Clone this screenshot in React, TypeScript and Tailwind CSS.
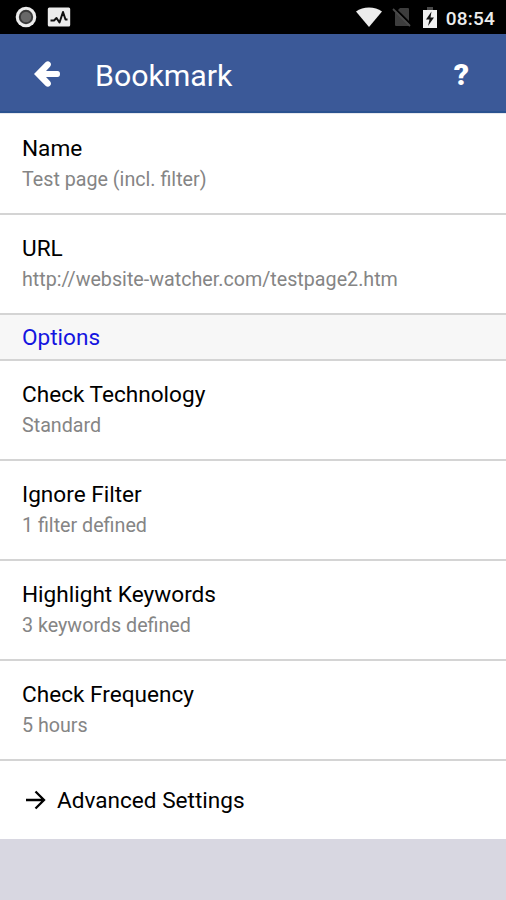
interface Setting {
  title: string;
  value: string;
}

const general: Setting[] = [
  { title: 'Name', value: 'Test page (incl. filter)' },
  { title: 'URL', value: 'http://website-watcher.com/testpage2.htm' },
];

const options: Setting[] = [
  { title: 'Check Technology', value: 'Standard' },
  { title: 'Ignore Filter', value: '1 filter defined' },
  { title: 'Highlight Keywords', value: '3 keywords defined' },
  { title: 'Check Frequency', value: '5 hours' },
];

function StatusBar() {
  return (
    <div className="flex h-[34px] shrink-0 items-center bg-black pr-[11px] pl-[15px]">
      <svg width="22" height="22" viewBox="0 0 22 22">
        <circle cx="11" cy="11" r="10.3" fill="#ececec" />
        <circle cx="11" cy="11" r="7.2" fill="#3a3a3a" />
        <circle cx="11" cy="11" r="5.2" fill="#686868" />
      </svg>
      <svg width="24" height="20" viewBox="0 0 24 20" className="ml-[10px]">
        <rect x="0.8" y="0.5" width="22.4" height="19" rx="1.5" fill="#ececec" />
        <path d="M3.500 13.500h3.500l2.500-2.500 3 4.500 3.500-10.500 2.500 7.500h2" fill="none" stroke="#111" strokeWidth="2" strokeLinejoin="round" />
      </svg>
      <div className="flex-1" />
      <svg width="26" height="20" viewBox="0 0 26 20">
        <path d="M0 4.500C7-1 19-1 26 4.500L13 20z" fill="#ececec" />
      </svg>
      <svg width="20" height="22" viewBox="0 0 20 22" className="ml-[10px]">
        <path d="M8 2h8q1 0 1 1v16q0 1-1 1H4q-1 0-1-1V7z" fill="#3d3d3d" />
        <path d="M2.500 2l17 17" stroke="#000" strokeWidth="2" />
        <path d="M1 3l17 17" stroke="#4a4a4a" strokeWidth="1.800" />
      </svg>
      <svg width="14" height="21" viewBox="0 0 14 21" className="ml-[11px]">
        <path d="M4 0h6v3H4z" fill="#4a4a4a" />
        <path d="M0 3h14v18H0z" fill="#f0f0f0" />
        <path d="M8.500 4.500L3 12.500h3.500L5 19l6-8.500H7.500z" fill="#111" />
      </svg>
      <span className="mt-[2px] ml-[9px] text-[19px] leading-none font-medium tracking-[0.2px] text-[#ececec]">08:54</span>
    </div>
  );
}

function Header() {
  return (
    <header className="flex h-[79px] shrink-0 items-center border-b-2 border-[#2a5290] bg-[#3b5998] pr-[37px] pl-[34px] text-white">
      <svg width="27" height="28" viewBox="0 0 27 28" className="mt-[3px]">
        <path d="M0 14L11.500 2.300q2.500-2 4.500 0t0 4.500L12 11h11.500q2.500 0 2.500 3t-2.500 3H12l4 4.200q2 2.500 0 4.500t-4.500 0z" fill="currentColor" />
      </svg>
      <h1 className="mt-[7px] ml-[34px] flex-1 text-[30.3px] leading-none">Bookmark</h1>
      <span className="mt-[4px] text-[30px] leading-none font-black">?</span>
    </header>
  );
}

function Row({ title, value }: Setting) {
  return (
    <div className="h-[100px] shrink-0 border-b-2 border-[#d4d4d4] px-[22px] pt-[20px]">
      <div className="text-[22.6px] leading-[28px] text-black">{title}</div>
      <div className="mt-[4px] text-[19.7px] leading-[26px] text-[#858585]">{value}</div>
    </div>
  );
}

export default function App() {
  return (
    <div className="flex h-[900px] w-[506px] flex-col overflow-hidden bg-[#d8d7e1] font-['Roboto',sans-serif]">
      <StatusBar />
      <Header />
      <main className="flex flex-col border-t border-[#e6e8ee] bg-white pt-px">
        {general.map((item) => (
          <Row key={item.title} {...item} />
        ))}
        <div className="flex h-[46px] items-center border-b-2 border-[#d4d4d4] bg-[#f7f7f7] px-[22px] pt-[2px] text-[22.6px] text-[#1414e0]">
          Options
        </div>
        {options.map((item) => (
          <Row key={item.title} {...item} />
        ))}
        <div className="flex h-[78px] items-center pl-[25px]">
          <svg width="22" height="20" viewBox="0 0 22 20">
            <path d="M1 10h18M10.500 1.500L19 10l-8.500 8.500" fill="none" stroke="#000" strokeWidth="2.300" />
          </svg>
          <span className="mt-[2px] ml-[10px] text-[22.6px] text-black">Advanced Settings</span>
        </div>
      </main>
    </div>
  );
}
